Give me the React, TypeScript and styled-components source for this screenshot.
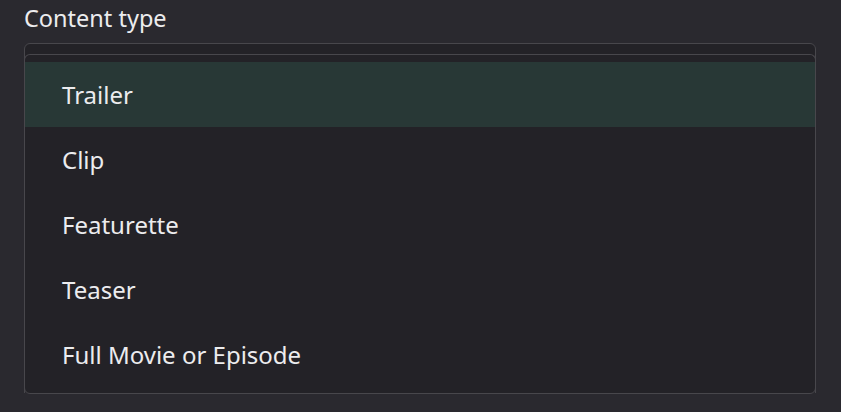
import styled, { createGlobalStyle } from "styled-components";

const GlobalStyle = createGlobalStyle`
  body {
    margin: 0;
    background: #2a292f;
    font-family: "Noto Sans", "Open Sans", sans-serif;
    color: #ececee;
  }
`;

const Page = styled.div`
  padding: 2px 25px 0 24px;
`;

const Label = styled.div`
  font-size: 23.5px;
  line-height: 32px;
  height: 41px;
`;

const SelectShell = styled.div`
  border: 1px solid #48474c;
  border-radius: 6px;
  background: #232227;
  padding-top: 10px;
`;

const Menu = styled.ul`
  list-style: none;
  margin: 0 -1px;
  padding: 7px 0 6px;
  border-top: 1px solid #48474c;
  border-left: 1px solid #48474c;
  border-right: 1px solid #48474c;
  border-radius: 6px 6px 0 0;
`;

const Item = styled.li<{ $active?: boolean }>`
  height: 65px;
  display: flex;
  align-items: center;
  padding-left: 37px;
  font-size: 24px;
  background: ${(p) => (p.$active ? "#283836" : "transparent")};
`;

const options = ["Trailer", "Clip", "Featurette", "Teaser", "Full Movie or Episode"];

export default function App() {
  return (
    <Page>
      <GlobalStyle />
      <Label>Content type</Label>
      <SelectShell>
        <Menu>
          {options.map((o, i) => (
            <Item key={o} $active={i === 0}>
              {o}
            </Item>
          ))}
        </Menu>
      </SelectShell>
    </Page>
  );
}
